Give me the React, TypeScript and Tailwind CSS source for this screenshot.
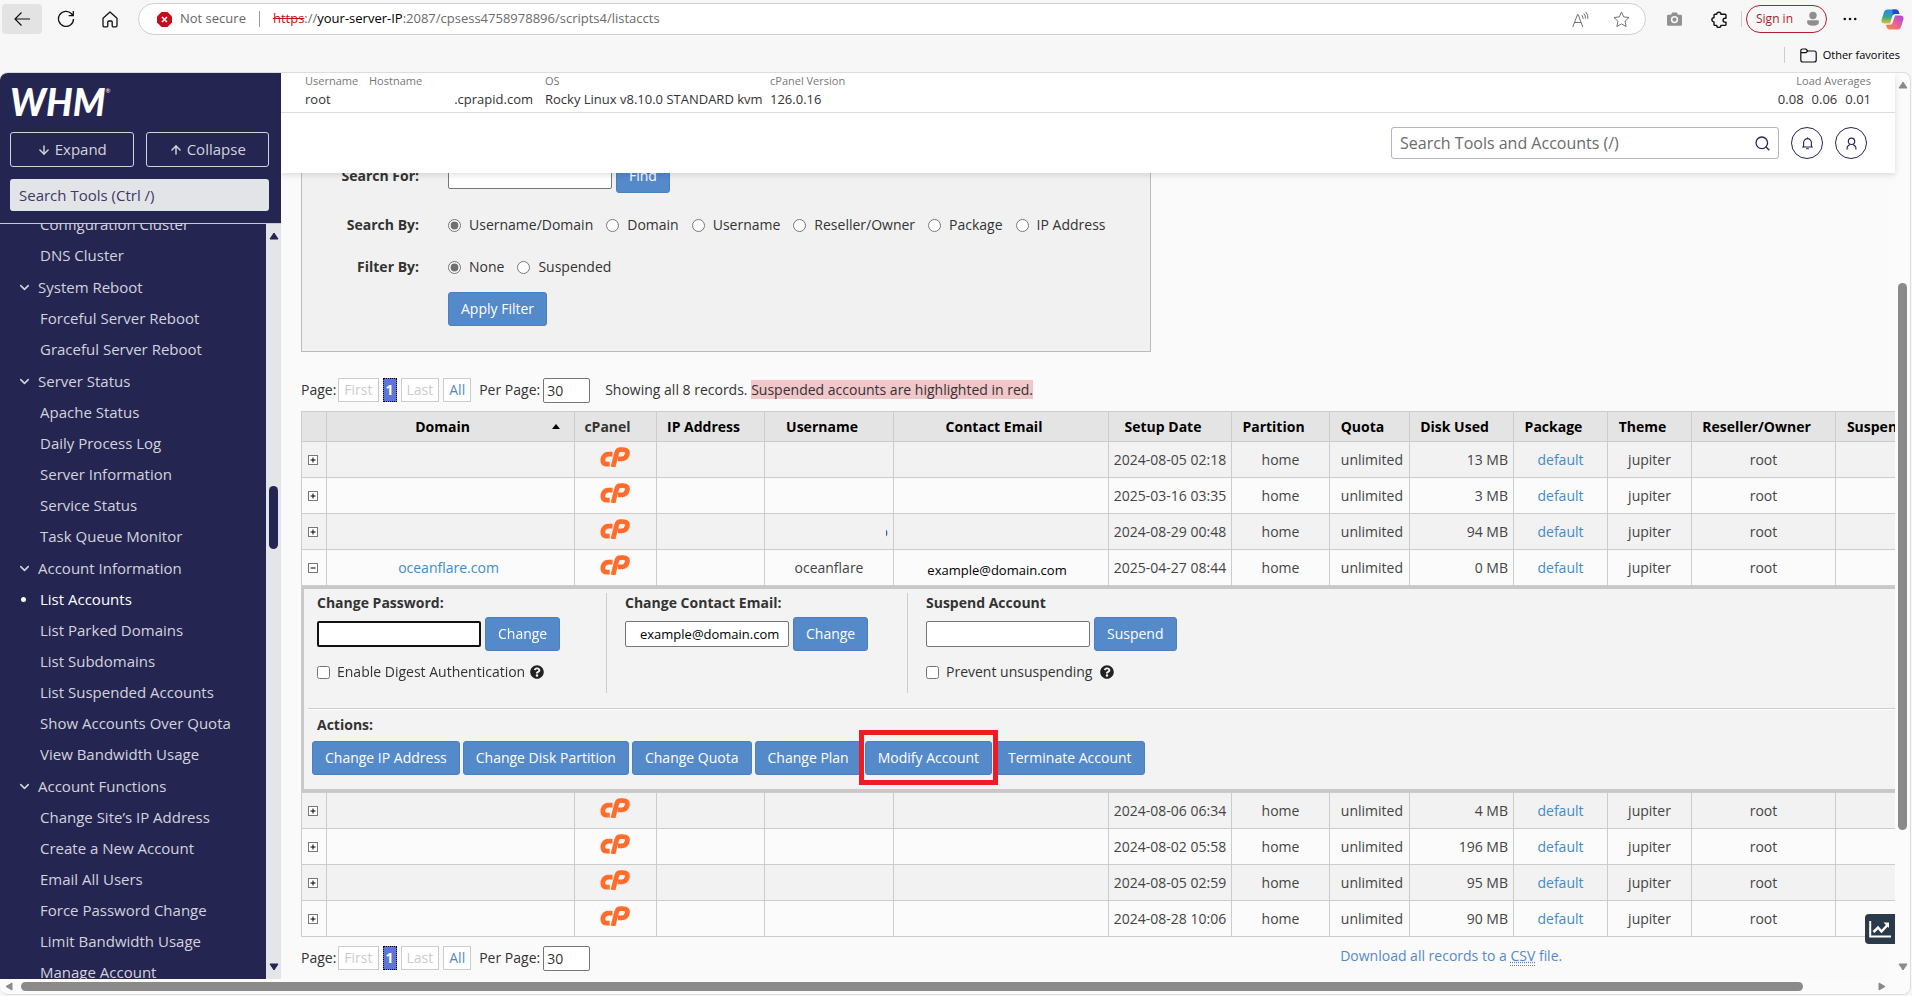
import type { ReactNode } from "react";
import { FaQuestionCircle } from "react-icons/fa";
import { ArrowDown, ArrowUp, ChevronDown } from "lucide-react";

type Account = {
  setup: string;
  disk: string;
  domain?: string;
  username?: string;
  email?: string;
  clipped?: boolean;
};

const accountsBefore: Account[] = [
  { setup: "2024-08-05 02:18", disk: "13 MB" },
  { setup: "2025-03-16 03:35", disk: "3 MB" },
  { setup: "2024-08-29 00:48", disk: "94 MB", clipped: true },
  {
    setup: "2025-04-27 08:44",
    disk: "0 MB",
    domain: "oceanflare.com",
    username: "oceanflare",
    email: "example@domain.com",
  },
];

const accountsAfter: Account[] = [
  { setup: "2024-08-06 06:34", disk: "4 MB" },
  { setup: "2024-08-02 05:58", disk: "196 MB" },
  { setup: "2024-08-05 02:59", disk: "95 MB" },
  { setup: "2024-08-28 10:06", disk: "90 MB" },
];

const menu = [
  { title: "", items: ["Configuration Cluster", "DNS Cluster"] },
  { title: "System Reboot", items: ["Forceful Server Reboot", "Graceful Server Reboot"] },
  {
    title: "Server Status",
    items: ["Apache Status", "Daily Process Log", "Server Information", "Service Status", "Task Queue Monitor"],
  },
  {
    title: "Account Information",
    items: [
      "List Accounts",
      "List Parked Domains",
      "List Subdomains",
      "List Suspended Accounts",
      "Show Accounts Over Quota",
      "View Bandwidth Usage",
    ],
  },
  {
    title: "Account Functions",
    items: [
      "Change Site’s IP Address",
      "Create a New Account",
      "Email All Users",
      "Force Password Change",
      "Limit Bandwidth Usage",
      "Manage Account",
    ],
  },
];

const columns = [
  { label: "", width: 25 },
  { label: "Domain", width: 248 },
  { label: "cPanel", width: 82 },
  { label: "IP Address", width: 108 },
  { label: "Username", width: 129 },
  { label: "Contact Email", width: 215 },
  { label: "Setup Date", width: 123 },
  { label: "Partition", width: 98 },
  { label: "Quota", width: 80 },
  { label: "Disk Used", width: 104 },
  { label: "Package", width: 94 },
  { label: "Theme", width: 84 },
  { label: "Reseller/Owner", width: 144 },
  { label: "Suspended", width: 113 },
];

const field = "h-[26px] w-[164px] rounded-[2px] border border-[#767676] bg-white px-1 text-sm text-black";
const cell = "border border-[#ccc] p-0 text-center align-middle whitespace-nowrap";

function BlueButton({ children }: { children: ReactNode }) {
  return (
    <button className="h-[34px] shrink-0 rounded-[3px] border border-[#4a7fc0] bg-[#5489ca] px-3 text-sm whitespace-nowrap text-white">
      {children}
    </button>
  );
}

function Triangle({ className, points }: { className: string; points: string }) {
  return (
    <svg className={className} viewBox="0 0 10 8" aria-hidden="true">
      <polygon points={points} fill="currentColor" stroke="currentColor" strokeLinejoin="round" />
    </svg>
  );
}

function CpanelMark() {
  return (
    <svg className="mx-auto" width="30" height="20" viewBox="0 0 30 20" fill="none" stroke="#ff6c2c" strokeWidth="4.800" aria-hidden="true">
      <path d="M12.500 7.200H8.800q-4.200 0-5.600 3.600Q1.600 17.200 7.300 17.200h2.400" />
      <path d="M13 20 16.900 5.200q.8-2.600 3.500-2.600h2.600q5.200 0 4.300 4.600-1.200 4.600-5.300 4.600h-4" />
    </svg>
  );
}

function BrowserBar() {
  return (
    <header className="h-[72px] shrink-0 text-black">
      <div className="flex h-[38px] items-center pl-[2px]">
        <button aria-label="Back" className="flex h-[30px] w-10 items-center justify-center rounded bg-[#e3e3e3]">
          <svg width="18" height="16" viewBox="0 0 18 16" fill="none" stroke="#111" strokeWidth="1.2">
            <path d="M17 8H2M8.5 1.5L2 8l6.500 6.500" />
          </svg>
        </button>
        <button aria-label="Refresh" className="ml-[15px] flex h-[30px] w-[18px] items-center justify-center">
          <svg width="18" height="18" viewBox="0 0 18 18" fill="none" stroke="#111" strokeWidth="1.3">
            <path d="M16.500 9A7.500 7.500 0 1 1 14.500 3.800L16 5.500M16.300 1v4.700H11.700" />
          </svg>
        </button>
        <button aria-label="Home" className="ml-[26px] flex h-[30px] w-[18px] items-center justify-center">
          <svg width="16" height="17" viewBox="0 0 16 17" fill="none" stroke="#111" strokeWidth="1.3" strokeLinejoin="round">
            <path d="M1 7.200 8 1l7 6.200V14.500q0 1.300-1.300 1.300H11q-.8 0-.8-.8v-4q0-1-1-1H6.800q-1 0-1 1v4q0 .8-.8.8H2.300Q1 15.800 1 14.500z" />
          </svg>
        </button>
        <div className="ml-[19px] flex h-8 flex-1 items-center rounded-full border border-[#cfcfcf] bg-white pr-[15px] pl-[18px] text-[13px]">
          <svg width="15" height="15" viewBox="0 0 15 15" aria-hidden="true">
            <path d="M4.500 0h6L15 4.500v6L10.500 15h-6L0 10.500v-6z" fill="#c50f1f" />
            <path d="M5 5l5 5M10 5l-5 5" stroke="#fff" strokeWidth="1.500" />
          </svg>
          <span className="ml-2 text-[#666]">Not secure</span>
          <span className="mx-[13px] h-4 w-px bg-[#999]" />
          <span className="whitespace-nowrap text-[#6b6b6b]">
            <span className="text-[#c50f1f] line-through">https</span>://<span className="text-black">your-server-IP</span>
            :2087/cpsess4758978896/scripts4/listaccts
          </span>
          <svg className="ml-auto" width="17" height="17" viewBox="0 0 17 17" fill="none" stroke="#707070">
            <path d="M.8 16 5.500 3.500h.6L10.800 16M2.500 11.500h6.600" />
            <path d="M9.800 4.200q1.600 1.800 1.200 3.700M11.800 2.500q2.200 2.400 1.600 5.200M13.600.8q3 3.300 2.200 7" />
          </svg>
          <svg className="ml-6" width="17" height="17" viewBox="0 0 17 17" fill="none" stroke="#707070" strokeLinejoin="round">
            <path d="M8.500 1l2.200 4.900 5.300.6-3.900 3.700 1 5.300-4.600-2.600-4.600 2.600 1-5.300L1 6.500l5.300-.6z" />
          </svg>
        </div>
        <svg className="ml-[21px]" width="15" height="14" viewBox="0 0 15 14" aria-hidden="true">
          <path d="M1.200 2.800H4L5.200.6h4.600L11 2.800h2.800q1.200 0 1.200 1.200v8.500q0 1.200-1.200 1.200H1.200Q0 13.700 0 12.500V4q0-1.200 1.200-1.200z" fill="#919191" />
          <circle cx="7.500" cy="7.600" r="2.900" fill="none" stroke="#f7f7f7" strokeWidth="1.600" />
        </svg>
        <svg className="ml-[29px]" width="16" height="17" viewBox="0 0 16 17" fill="none" stroke="#111" strokeWidth="1.400" strokeLinejoin="round">
          <path d="M5.700 3.300a2.100 2.100 0 0 1 4.200 0H14q1 0 1 1v3h-1a1.900 1.900 0 0 0 0 3.800h1v2.300q0 1-1 1H9.900a2.100 2.100 0 0 1-4.200 0H4q-1 0-1-1v-2.500a2 2 0 0 1 0-4.200V4.300q0-1 1-1z" />
        </svg>
        <span className="ml-[14px] h-4 w-px bg-[#ccc]" />
        <button className="ml-1 flex h-7 items-center rounded-full border border-[#b0202a] pr-[5px] pl-[9px] text-[12px] text-[#b0202a]">
          Sign in
          <svg className="ml-3" width="16" height="16" viewBox="0 0 16 16" fill="#8f8f8f" aria-hidden="true">
            <circle cx="8" cy="4.500" r="3.700" />
            <path d="M2 10.500q0-1.300 1.300-1.300h9.400q1.300 0 1.300 1.300 0 4.300-6 4.300t-6-4.300z" />
          </svg>
        </button>
        <svg className="ml-4" width="14" height="4" viewBox="0 0 14 4" fill="#111" aria-hidden="true">
          <circle cx="1.800" cy="2" r="1.300" />
          <circle cx="7" cy="2" r="1.300" />
          <circle cx="12.200" cy="2" r="1.300" />
        </svg>
        <svg className="mr-2 ml-6" width="23" height="21" viewBox="0 0 23 21" aria-hidden="true">
          <defs>
            <linearGradient id="cool" x1="0" y1="0" x2="0" y2="1">
              <stop offset="0" stopColor="#2a86e8" />
              <stop offset=".55" stopColor="#34a98f" />
              <stop offset="1" stopColor="#e8c21c" />
            </linearGradient>
            <linearGradient id="warm" x1="1" y1="0" x2="0" y2="1">
              <stop offset="0" stopColor="#9a4be8" />
              <stop offset=".5" stopColor="#ee5f92" />
              <stop offset="1" stopColor="#f98a3c" />
            </linearGradient>
          </defs>
          <path d="M6 .5h9q2 0 2.700 2L18.500 5H14q-2 0-2.600 2L9 14.500H3.500q-3.800 0-2.800-4L3 3Q3.800.5 6 .5z" fill="url(#cool)" />
          <path d="M11.500.5H15q2 0 2.700 2L18.500 5H14q-1.500 0-2.300 1.200z" fill="#2348c8" />
          <path d="M17 20.500H8.500q-2 0-2.700-2L5 15.800h4q2 0 2.600-2L14 6.500h5.500q3.800 0 2.800 4L20 18q-.8 2.500-3 2.500z" fill="url(#warm)" />
        </svg>
      </div>
      <div className="flex h-[34px] items-center justify-end pr-3">
        <span className="h-4 w-px bg-[#ccc]" />
        <svg className="ml-[15px]" width="17" height="15" viewBox="0 0 17 15" fill="none" stroke="#111" strokeWidth="1.200" strokeLinejoin="round">
          <path d="M.8 3q0-2 2-2h3l2 2h6.400q2 0 2 2v7q0 2-2 2H2.800q-2 0-2-2zM.8 4.700h5L7.800 3" />
        </svg>
        <span className="ml-[6px] text-[11px]">Other favorites</span>
      </div>
    </header>
  );
}

function Sidebar() {
  return (
    <aside className="flex w-[281px] shrink-0 flex-col bg-[#252552] text-[#d3d3dc]">
      <div className="border-b border-[#c9c9d4] px-[10px] pb-3">
        <div className="mb-[3px] flex h-14 items-center font-[Lato] text-[37px] leading-none font-black text-white italic">
          WHM<span className="mb-5 text-[6px] font-normal not-italic">®</span>
        </div>
        <div className="grid grid-cols-2 gap-3 pr-[2px] text-[15px]">
          <button className="flex h-[35px] items-center justify-center gap-1 rounded-[3px] border border-[#d3d3dc]">
            <ArrowDown size={14} strokeWidth={2.5} /> Expand
          </button>
          <button className="flex h-[35px] items-center justify-center gap-1 rounded-[3px] border border-[#d3d3dc]">
            <ArrowUp size={14} strokeWidth={2.5} /> Collapse
          </button>
        </div>
        <input
          aria-label="Search Tools"
          placeholder="Search Tools (Ctrl /)"
          className="mt-3 h-8 w-[259px] rounded-[3px] bg-[#e3e4e7] px-[9px] text-[15px] placeholder:text-[#3a3a63]"
        />
      </div>
      <div className="flex min-h-0 flex-1">
        <nav className="min-w-0 flex-1 overflow-hidden text-[15px]">
          <div className="-mt-[15px]">
            {menu.map((section) => (
              <section key={section.items[0]}>
                {section.title && (
                  <h2 className="flex h-8 items-center gap-[6px] pl-[17px]">
                    <ChevronDown size={15} strokeWidth={2.5} />
                    {section.title}
                  </h2>
                )}
                <ul>
                  {section.items.map((item) => (
                    <li key={item} className="flex h-[31px] items-center">
                      <span className={`ml-[21px] h-[5px] w-[5px] rounded-full ${item === "List Accounts" ? "bg-white" : ""}`} />
                      <a href="#" className={`ml-[14px] whitespace-nowrap ${item === "List Accounts" ? "text-white" : ""}`}>
                        {item}
                      </a>
                    </li>
                  ))}
                </ul>
              </section>
            ))}
          </div>
        </nav>
        <div className="flex w-[15px] flex-col items-center bg-[#e4e5e8] py-2 text-[#252552]">
          <Triangle className="h-2 w-[10px]" points="5,1 9,7 1,7" />
          <div className="mt-[246px] h-[63px] w-[9px] rounded-full bg-[#252552]" />
          <Triangle className="mt-auto h-2 w-[10px]" points="5,7 9,1 1,1" />
        </div>
      </div>
    </aside>
  );
}

function Radio({ name, label, checked }: { name: string; label: string; checked?: boolean }) {
  return (
    <label className="flex items-center gap-2">
      <input type="radio" name={name} defaultChecked={checked} className="h-[13px] w-[13px] accent-[#707070]" />
      {label}
    </label>
  );
}

function FilterForm() {
  return (
    <form className="-mt-5 w-[850px] border border-[#bbb] bg-[#f1f1f1] pt-[5px] pb-[25px] text-sm text-[#333]">
      <div className="flex h-[34px] items-center">
        <label htmlFor="search-for" className="mr-[29px] w-[117px] text-right font-bold">
          Search For:
        </label>
        <input id="search-for" className={field} />
        <span className="ml-1">
          <BlueButton>Find</BlueButton>
        </span>
      </div>
      <div className="mt-[22px] flex h-5 items-center gap-[13px]">
        <span className="mr-4 w-[117px] text-right font-bold">Search By:</span>
        <Radio name="by" label="Username/Domain" checked />
        <Radio name="by" label="Domain" />
        <Radio name="by" label="Username" />
        <Radio name="by" label="Reseller/Owner" />
        <Radio name="by" label="Package" />
        <Radio name="by" label="IP Address" />
      </div>
      <div className="mt-[22px] flex h-5 items-center gap-[13px]">
        <span className="mr-4 w-[117px] text-right font-bold">Filter By:</span>
        <Radio name="filter" label="None" checked />
        <Radio name="filter" label="Suspended" />
      </div>
      <div className="mt-[15px] ml-[146px] flex">
        <BlueButton>Apply Filter</BlueButton>
      </div>
    </form>
  );
}

function Pager({ id }: { id: string }) {
  return (
    <div className="flex h-6 items-center text-sm whitespace-nowrap text-[#333]">
      Page:
      <button disabled className="ml-[2px] h-6 border border-[#ccc] bg-white px-[5px] text-[#ccc]">
        First
      </button>
      <button className="ml-1 h-6 border border-dotted border-black bg-[#5b76d8] px-[2px] font-bold text-white">1</button>
      <button disabled className="ml-1 h-6 border border-[#ccc] bg-white px-[5px] text-[#ccc]">
        Last
      </button>
      <button className="ml-1 h-6 border border-[#ccc] bg-white px-[5px] text-[#5489ca]">All</button>
      <label htmlFor={id} className="ml-2">
        Per Page:
      </label>
      <input id={id} defaultValue="30" className="ml-[3px] h-[25px] w-[47px] rounded-[2px] border border-[#767676] bg-white px-[3px]" />
    </div>
  );
}

function AccountRow({ account, shaded }: { account: Account; shaded: boolean }) {
  const open = Boolean(account.domain);
  return (
    <tr className={`h-9 ${shaded ? "bg-[#f2f2f2]" : "bg-[#fbfbfb]"}`}>
      <td className={cell}>
        <button aria-label={open ? "Collapse row" : "Expand row"} className="block px-[6px]">
          <svg width="10" height="10" viewBox="0 0 10 10" aria-hidden="true">
            <rect x=".5" y=".5" width="9" height="9" fill="#fff" stroke="#777" />
            <path d={open ? "M2.500 5h5" : "M2.500 5h5M5 2.500v5"} stroke="#000" />
          </svg>
        </button>
      </td>
      <td className={`${cell} pr-1`}>
        {account.domain && (
          <a href="#" className="text-[#428bca]">
            {account.domain}
          </a>
        )}
      </td>
      <td className={`${cell} pr-[2px]`}>
        <a href="#" aria-label="cPanel" className="block pb-[6px]">
          <CpanelMark />
        </a>
      </td>
      <td className={cell} />
      <td className={cell}>
        {account.clipped && (
          <span className="mr-[5px] ml-auto flex w-[2px] justify-end overflow-hidden">o</span>
        )}
        {account.username}
      </td>
      <td className={`${cell} pt-[6px] pr-2 text-[13px] text-black`}>{account.email}</td>
      <td className={cell}>{account.setup}</td>
      <td className={cell}>home</td>
      <td className={`${cell} pr-[6px] text-right`}>unlimited</td>
      <td className={`${cell} pr-[5px] text-right`}>{account.disk}</td>
      <td className={cell}>
        <a href="#" className="text-[#428bca]">
          default
        </a>
      </td>
      <td className={cell}>jupiter</td>
      <td className={cell}>root</td>
      <td className={cell} />
    </tr>
  );
}

function AccountPanel() {
  return (
    <div className="h-[206px] border-t-[3px] border-b-[3px] border-l-2 border-[#c8c8c8] bg-[#f3f3f3] text-left text-[#333]">
      <div className="flex pt-1">
        <div className="h-[100px] w-[303px] border-r border-[#ccc] pl-[13px]">
          <label htmlFor="password" className="block leading-5 font-bold">
            Change Password:
          </label>
          <div className="mt-1 flex items-center gap-1">
            <input id="password" className="h-[26px] w-[164px] rounded-[2px] border-2 border-[#101010] bg-white px-1 outline-none" autoFocus />
            <BlueButton>Change</BlueButton>
          </div>
          <label className="mt-[11px] flex items-center leading-5 whitespace-nowrap">
            <input type="checkbox" className="mr-[7px] h-[13px] w-[13px]" />
            Enable Digest Authentication
            <FaQuestionCircle size={14} className="ml-[5px] text-[#222]" />
          </label>
        </div>
        <div className="h-[100px] w-[301px] border-r border-[#ccc] pl-[18px]">
          <label htmlFor="contact" className="block leading-5 font-bold">
            Change Contact Email:
          </label>
          <div className="mt-1 flex items-center gap-1">
            <input
              id="contact"
              defaultValue="example@domain.com"
              className="h-[26px] w-[164px] rounded-[2px] border border-[#767676] bg-white pl-[14px] text-[13px] text-black"
            />
            <BlueButton>Change</BlueButton>
          </div>
        </div>
        <div className="h-[100px] pl-[18px]">
          <label htmlFor="suspend" className="block leading-5 font-bold">
            Suspend Account
          </label>
          <div className="mt-1 flex items-center gap-1">
            <input id="suspend" className={field} />
            <BlueButton>Suspend</BlueButton>
          </div>
          <label className="mt-[11px] flex items-center leading-5 whitespace-nowrap">
            <input type="checkbox" className="mr-[7px] h-[13px] w-[13px]" />
            Prevent unsuspending
            <FaQuestionCircle size={14} className="ml-2 text-[#222]" />
          </label>
        </div>
      </div>
      <div className="mt-[15px] ml-1 border-t border-[#ccc] pt-[6px] shadow-[inset_0_1px_0_#fff]">
        <div className="pl-[9px] leading-5 font-bold">Actions:</div>
        <div className="mt-[6px] flex gap-[3px] pl-1">
          <BlueButton>Change IP Address</BlueButton>
          <BlueButton>Change Disk Partition</BlueButton>
          <BlueButton>Change Quota</BlueButton>
          <BlueButton>Change Plan</BlueButton>
          <div className="relative">
            <BlueButton>Modify Account</BlueButton>
            <span className="pointer-events-none absolute -inset-x-[6px] -top-[11px] -bottom-[10px] z-10 border-[5px] border-[#ed1c24]" />
          </div>
          <BlueButton>Terminate Account</BlueButton>
        </div>
      </div>
    </div>
  );
}

function AccountTable() {
  return (
    <table className="mt-[9px] w-[1647px] table-fixed border-collapse text-sm text-[#444]">
      <colgroup>
        {columns.map((column) => (
          <col key={column.label} style={{ width: column.width }} />
        ))}
      </colgroup>
      <thead>
        <tr className="h-[30px] bg-[#e4e4e4] text-black">
          {columns.map((column) => (
            <th
              key={column.label}
              className={`border border-[#ccc] p-0 whitespace-nowrap ${
                column.label === "cPanel" ? "pr-4 text-[#333]" : column.label === "" ? "" : "pr-[14px]"
              }`}
            >
              {column.label === "Domain" ? (
                <span className="flex items-center justify-center pl-[86px]">
                  <span className="flex-1 text-center">Domain</span>
                  <svg className="ml-[80px]" width="8" height="5" viewBox="0 0 8 5" aria-hidden="true">
                    <polygon points="4,0 8,5 0,5" />
                  </svg>
                </span>
              ) : (
                column.label
              )}
            </th>
          ))}
        </tr>
      </thead>
      <tbody>
        {accountsBefore.map((account, i) => (
          <AccountRow key={account.setup} account={account} shaded={i % 2 === 0} />
        ))}
        <tr>
          <td colSpan={columns.length} className="border border-[#ccc] p-0">
            <AccountPanel />
          </td>
        </tr>
        {accountsAfter.map((account, i) => (
          <AccountRow key={account.setup} account={account} shaded={i % 2 === 0} />
        ))}
      </tbody>
    </table>
  );
}

function TopBar() {
  return (
    <div className="relative z-10 shrink-0 bg-white shadow-[0_2px_6px_rgba(0,0,0,0.12)]">
      <div className="flex h-10 items-start gap-3 border-b border-[#ddd] pr-6 pl-6 text-[13px] leading-5 whitespace-nowrap text-[#333]">
        <div className="w-[52px]">
          <div className="text-[11px] leading-4 text-[#777]">Username</div>root
        </div>
        <div className="w-[164px] text-right">
          <div className="text-left text-[11px] leading-4 text-[#777]">Hostname</div>.cprapid.com
        </div>
        <div className="w-[213px]">
          <div className="text-[11px] leading-4 text-[#777]">OS</div>Rocky Linux v8.10.0 STANDARD kvm
        </div>
        <div>
          <div className="text-[11px] leading-4 text-[#777]">cPanel Version</div>126.0.16
        </div>
        <div className="ml-auto text-right">
          <div className="text-[11px] leading-4 text-[#777]">Load Averages</div>
          <div className="flex justify-end gap-2">
            <span>0.08</span>
            <span>0.06</span>
            <span>0.01</span>
          </div>
        </div>
      </div>
      <div className="flex h-[60px] items-center justify-end gap-3 pr-7">
        <label className="flex h-8 w-[388px] items-center rounded-[3px] border border-[#b4b4c0] px-2">
          <input
            aria-label="Search Tools and Accounts"
            placeholder="Search Tools and Accounts (/)"
            className="min-w-0 flex-1 text-base outline-none placeholder:text-[#6b6b6b]"
          />
          <svg width="15" height="15" viewBox="0 0 15 15" fill="none" stroke="#252552" strokeWidth="1.300">
            <circle cx="6.800" cy="6.800" r="5.800" />
            <path d="M11 11l3.300 3.300" />
          </svg>
        </label>
        <button aria-label="Notifications" className="flex h-8 w-8 items-center justify-center rounded-full border border-[#252552]">
          <svg width="13" height="13" viewBox="0 0 14 14" fill="none" stroke="#252552" strokeWidth="1.200">
            <path d="M1.200 10.800h11.600M2.800 10.500V6a4.200 4.200 0 0 1 8.400 0v4.500M5.500 12.700h3M7 .6v1.200" />
          </svg>
        </button>
        <button aria-label="User" className="flex h-8 w-8 items-center justify-center rounded-full border border-[#252552]">
          <svg width="11" height="13" viewBox="0 0 12 14" fill="none" stroke="#252552" strokeWidth="1.300">
            <circle cx="6" cy="4.600" r="3.500" />
            <path d="M1.200 13.500V12q0-1.500 1-2.200L4.300 8M10.800 13.500V12q0-1.500-1-2.200L7.700 8" />
          </svg>
        </button>
      </div>
    </div>
  );
}

export default function App() {
  return (
    <div className="flex h-screen flex-col overflow-hidden bg-[#f7f7f7] font-['Open_Sans',sans-serif]">
      <BrowserBar />
      <div className="mr-px mb-px flex min-h-0 flex-1 flex-col overflow-hidden rounded-lg border-t border-r border-b border-[#ddd] bg-[#fbfbfb]">
        <div className="flex min-h-0 flex-1">
          <Sidebar />
          <main className="relative flex min-w-0 flex-1 flex-col bg-[#fafafa]">
            <TopBar />
            <div className="min-h-0 flex-1 overflow-hidden pl-5">
              <FilterForm />
              <div className="mt-[26px] flex items-center text-sm text-[#333]">
                <Pager id="per-page-top" />
                <p className="ml-[15px] whitespace-nowrap">
                  Showing all 8 records. <span className="bg-[#f2c7ca]">Suspended accounts are highlighted in red.</span>
                </p>
              </div>
              <AccountTable />
              <div className="mt-[9px] flex items-start text-sm">
                <Pager id="per-page-bottom" />
                <a href="#" className="ml-[750px] whitespace-nowrap text-[#5489ca]">
                  Download all records to a{" "}
                  <abbr title="Comma Separated Values" className="border-b border-dotted border-[#777]">
                    CSV
                  </abbr>{" "}
                  file.
                </a>
              </div>
            </div>
            <button aria-label="Statistics" className="absolute right-0 bottom-[35px] flex h-[30px] w-[30px] items-center justify-center rounded-l bg-[#2b3a4a]">
              <svg width="22" height="17" viewBox="0 0 22 17" fill="none" stroke="#fff" strokeWidth="2">
                <path d="M1.200 0v15.500H22" />
                <path d="M4.500 11l4.500-4.500 3.500 4L18.500 4" strokeWidth="2.500" />
                <path d="M14.500 1.500H20V7z" fill="#fff" stroke="none" />
              </svg>
            </button>
          </main>
          <div className="flex w-[15px] shrink-0 flex-col items-center py-2 text-[#8a8a8a]">
            <Triangle className="h-2 w-[10px]" points="5,1 9,7 1,7" />
            <div className="mt-[194px] h-[547px] w-[9px] rounded-full bg-[#8a8a8a]" />
            <Triangle className="mt-auto h-2 w-[10px]" points="5,7 9,1 1,1" />
          </div>
        </div>
        <div className="flex h-[15px] shrink-0 items-center pr-[23px] pl-[5px] text-[#8a8a8a]">
          <Triangle className="h-[9px] w-[10px]" points="1,4 7,0.500 7,7.500" />
          <div className="ml-[6px] h-[9px] flex-1 rounded-full bg-[#8a8a8a]" />
          <Triangle className="ml-[74px] h-[9px] w-[10px]" points="8,4 2,0.500 2,7.500" />
        </div>
      </div>
    </div>
  );
}
